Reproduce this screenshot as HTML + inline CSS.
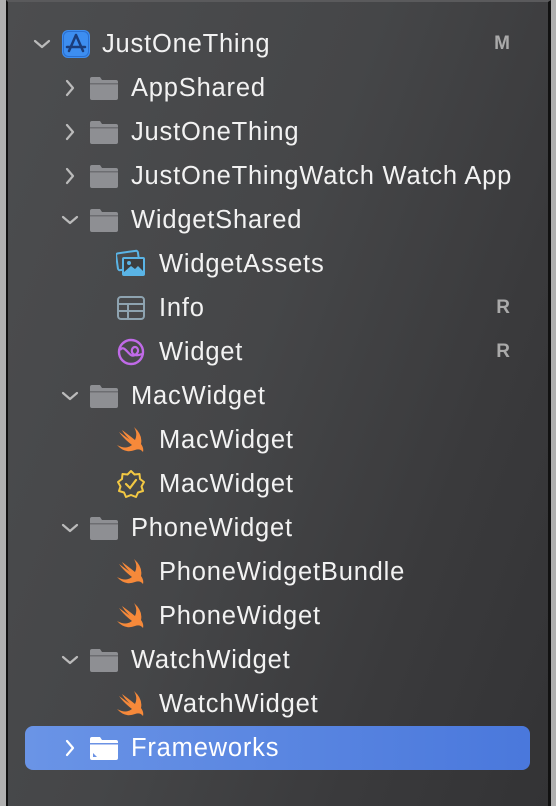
<!DOCTYPE html>
<html><head><style>
body{margin:0;width:556px;height:806px;overflow:hidden;background:#b0b0b0;font-family:"Liberation Sans",sans-serif;}
.panel{position:absolute;left:6px;top:0;width:545px;height:806px;background:linear-gradient(110deg,#4c4d4f 0%,#454648 45%,#3a3a3c 75%,#333335 100%);border-left:2px solid #111;border-right:3px solid #111;border-top:2px solid #5a5a5c;box-sizing:border-box}
.row{position:absolute;left:0;height:44px;width:556px;color:#f2f2f2;font-size:25.5px;letter-spacing:0.8px}
.row span.t{position:absolute;top:8px;line-height:28px;white-space:nowrap}
.chev{position:absolute;top:12px;width:20px;height:20px}
.ic{position:absolute;top:7px;width:30px;height:30px}
.badge{position:absolute;right:46px;top:11px;color:#aaa;font-weight:bold;font-size:19px;letter-spacing:0}
.sel{position:absolute;left:25px;top:726px;width:505px;height:44px;border-radius:8px;background:linear-gradient(90deg,#6a94e6,#4a78dc)}
</style></head><body>
<div class="panel"></div>
<div class="sel"></div>
<svg width="0" height="0" style="position:absolute">
<defs>
<symbol id="down" viewBox="0 0 20 20"><path d="M3 7 L10 13 L17 7" fill="none" stroke="#bbb" stroke-width="2.2" stroke-linecap="round" stroke-linejoin="round"/></symbol>
<symbol id="right" viewBox="0 0 20 20"><path d="M7 3 L13 10 L7 17" fill="none" stroke="#bbb" stroke-width="2.2" stroke-linecap="round" stroke-linejoin="round"/></symbol>
<symbol id="rightw" viewBox="0 0 20 20"><path d="M7 3 L13 10 L7 17" fill="none" stroke="#fff" stroke-width="2.2" stroke-linecap="round" stroke-linejoin="round"/></symbol>
<symbol id="folder" viewBox="0 0 30 30"><path d="M1 6 Q1 4 3 4 H11 L13 7 H27 Q29 7 29 9 V25 Q29 27 27 27 H3 Q1 27 1 25 Z" fill="#8e8f93"/><rect x="1" y="10" width="28" height="1.5" fill="#6d6e72"/></symbol>
<symbol id="folderw" viewBox="0 0 30 30"><path d="M1 6 Q1 4 3 4 H11 L13 7 H27 Q29 7 29 9 V25 Q29 27 27 27 H3 Q1 27 1 25 Z" fill="#fff"/><rect x="1" y="10" width="28" height="1.5" fill="#6b92e4"/><path d="M4 20 L8 24 H4Z" fill="#6b92e4"/></symbol>
<symbol id="swift" viewBox="0 0 30 30"><path d="M18 2 Q27 10 25 19 Q28 23 27 27 Q24 23 19 25 Q9 29 1 20 Q10 25 16 20 Q8 14 3 7 Q10 12 14 15 Q8 9 6 5 Q14 11 19 15 Q22 9 18 2Z" fill="#f6893a"/></symbol>
</defs></svg>

<div class="row" style="top:22px"><svg class="chev" style="left:32px"><use href="#down"/></svg>
<svg class="ic" style="left:61px;top:7px" viewBox="0 0 30 30"><rect x="1" y="1" width="28" height="28" rx="6" fill="#3d8ef0"/><rect x="2.5" y="2.5" width="25" height="25" rx="5" fill="none" stroke="#2a6fd0" stroke-width="1"/><path d="M15 6 L8 22 M15 6 L22 22 M6 18 H24" stroke="#1b3d7a" stroke-width="2.5" fill="none" stroke-linecap="round"/></svg>
<span class="t" style="left:102px">JustOneThing</span><span class="badge">M</span></div>

<div class="row" style="top:66px"><svg class="chev" style="left:60px"><use href="#right"/></svg><svg class="ic" style="left:89px"><use href="#folder"/></svg><span class="t" style="left:131px">AppShared</span></div>
<div class="row" style="top:110px"><svg class="chev" style="left:60px"><use href="#right"/></svg><svg class="ic" style="left:89px"><use href="#folder"/></svg><span class="t" style="left:131px">JustOneThing</span></div>
<div class="row" style="top:154px"><svg class="chev" style="left:60px"><use href="#right"/></svg><svg class="ic" style="left:89px"><use href="#folder"/></svg><span class="t" style="left:131px">JustOneThingWatch Watch App</span></div>
<div class="row" style="top:198px"><svg class="chev" style="left:60px"><use href="#down"/></svg><svg class="ic" style="left:89px"><use href="#folder"/></svg><span class="t" style="left:131px">WidgetShared</span></div>

<div class="row" style="top:242px"><svg class="ic" style="left:116px" viewBox="0 0 30 30"><rect x="1" y="3" width="22" height="17" rx="2" fill="none" stroke="#5ab4e6" stroke-width="2" transform="rotate(-8 12 12)"/><rect x="6" y="8" width="23" height="19" rx="2" fill="#5ab4e6"/><rect x="8" y="10" width="19" height="13" fill="#3c3d40"/><circle cx="13" cy="14" r="2" fill="#5ab4e6"/><path d="M8 23 L15 17 L19 20 L22 17 L27 22 V23Z" fill="#5ab4e6"/></svg><span class="t" style="left:159px">WidgetAssets</span></div>
<div class="row" style="top:286px"><svg class="ic" style="left:116px" viewBox="0 0 30 30"><rect x="2" y="4" width="26" height="22" rx="3" fill="none" stroke="#8ea3b0" stroke-width="2"/><path d="M2 11 H28 M2 18 H28 M12 11 V26" stroke="#8ea3b0" stroke-width="2"/></svg><span class="t" style="left:159px">Info</span><span class="badge">R</span></div>
<div class="row" style="top:330px"><svg class="ic" style="left:116px" viewBox="0 0 30 30"><circle cx="15" cy="15" r="12" fill="none" stroke="#c06ae8" stroke-width="2.4"/><path d="M4 13 C9 6 13 22 19 18 C24 15 22 10 19 10 C14 10 14 22 26 17" fill="none" stroke="#c06ae8" stroke-width="2.2"/></svg><span class="t" style="left:159px">Widget</span><span class="badge">R</span></div>
<div class="row" style="top:374px"><svg class="chev" style="left:60px"><use href="#down"/></svg><svg class="ic" style="left:89px"><use href="#folder"/></svg><span class="t" style="left:131px">MacWidget</span></div>
<div class="row" style="top:418px"><svg class="ic" style="left:116px"><use href="#swift"/></svg><span class="t" style="left:159px">MacWidget</span></div>
<div class="row" style="top:462px"><svg class="ic" style="left:116px" viewBox="0 0 30 30"><path d="M15 2 L18.5 5.5 L23.5 5 L24 10 L28 13 L25.5 17.5 L27 22 L22 23.5 L20 28 L15 26 L10 28 L8 23.5 L3 22 L4.5 17.5 L2 13 L6 10 L6.5 5 L11.5 5.5Z" fill="none" stroke="#f2c843" stroke-width="2" stroke-linejoin="round"/><path d="M10 15 L14 19 L20 11" fill="none" stroke="#f2c843" stroke-width="2.2" stroke-linecap="round"/></svg><span class="t" style="left:159px">MacWidget</span></div>
<div class="row" style="top:506px"><svg class="chev" style="left:60px"><use href="#down"/></svg><svg class="ic" style="left:89px"><use href="#folder"/></svg><span class="t" style="left:131px">PhoneWidget</span></div>
<div class="row" style="top:550px"><svg class="ic" style="left:116px"><use href="#swift"/></svg><span class="t" style="left:159px">PhoneWidgetBundle</span></div>
<div class="row" style="top:594px"><svg class="ic" style="left:116px"><use href="#swift"/></svg><span class="t" style="left:159px">PhoneWidget</span></div>
<div class="row" style="top:638px"><svg class="chev" style="left:60px"><use href="#down"/></svg><svg class="ic" style="left:89px"><use href="#folder"/></svg><span class="t" style="left:131px">WatchWidget</span></div>
<div class="row" style="top:682px"><svg class="ic" style="left:116px"><use href="#swift"/></svg><span class="t" style="left:159px">WatchWidget</span></div>
<div class="row" style="top:726px;color:#fff"><svg class="chev" style="left:60px"><use href="#rightw"/></svg><svg class="ic" style="left:89px"><use href="#folderw"/></svg><span class="t" style="left:131px">Frameworks</span></div>
</body></html>
